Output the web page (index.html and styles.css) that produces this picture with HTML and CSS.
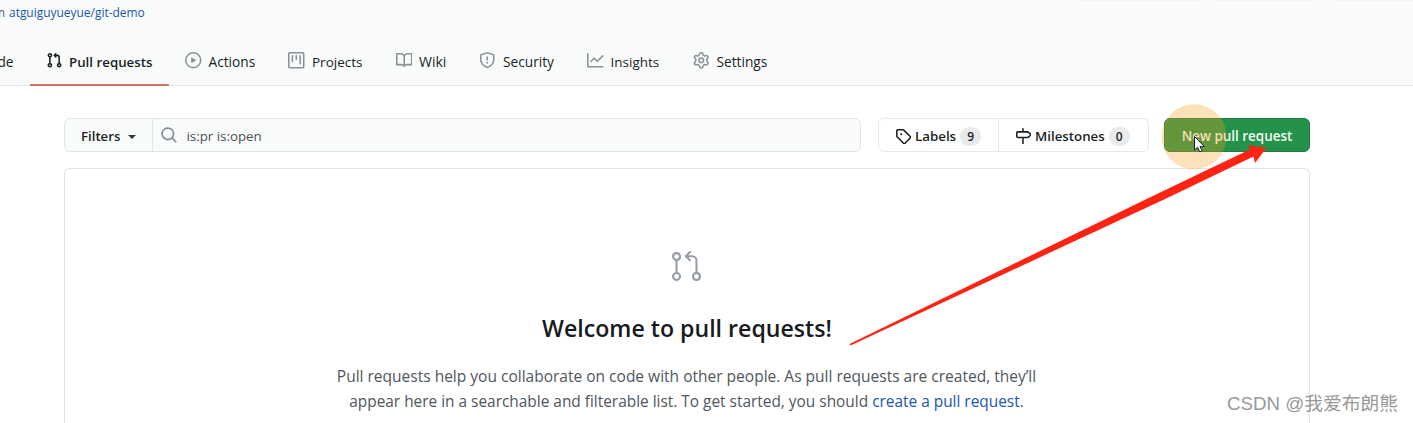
FILE: index.html
```html
<!DOCTYPE html>
<html lang="en">
<head>
<meta charset="utf-8">
<title>Pull requests</title>
<link rel="stylesheet" href="styles.css">
</head>
<body>
<header class="repo-head">
  <div class="top-actions"><span class="stub stub-watch"></span><span class="stub stub-star"></span><span class="stub stub-fork"></span></div>
  <div class="forked"><span class="forked-from">m</span> <a class="link">atguiguyueyue/git-demo</a></div>
  <nav class="tabs">
    <a class="tab code">de</a>
    <a class="tab pulls selected"><svg class="icon" viewBox="0 0 16 16"><path fill-rule="evenodd" d="M7.177 3.073L9.573.677A.25.25 0 0110 .854v4.792a.25.25 0 01-.427.177L7.177 3.427a.25.25 0 010-.354zM3.75 2.5a.75.75 0 100 1.5.75.75 0 000-1.5zm-2.25.75a2.25 2.25 0 113 2.122v5.256a2.251 2.251 0 11-1.5 0V5.372A2.25 2.25 0 011.5 3.25zM11 2.5h-1V4h1a1 1 0 011 1v5.628a2.251 2.251 0 101.5 0V5A2.5 2.5 0 0011 2.5zm1 10.25a.75.75 0 111.5 0 .75.75 0 01-1.5 0zM3.75 12a.75.75 0 100 1.5.75.75 0 000-1.5z"/></svg>Pull requests</a>
    <a class="tab actions"><svg class="icon" viewBox="0 0 16 16"><path fill-rule="evenodd" d="M1.5 8a6.500 6.500 0 1113 0 6.500 6.500 0 01-13 0zM8 0a8 8 0 100 16A8 8 0 008 0zM6.379 5.227A.25.25 0 006 5.442v5.117a.25.25 0 00.379.214l4.264-2.559a.25.25 0 000-.428L6.379 5.227z"/></svg>Actions</a>
    <a class="tab projects"><svg class="icon" viewBox="0 0 16 16"><path fill-rule="evenodd" d="M1.750 0A1.750 1.750 0 000 1.750v12.500C0 15.216.784 16 1.750 16h12.500A1.750 1.750 0 0016 14.250V1.750A1.750 1.750 0 0014.250 0H1.750zM1.500 1.750a.25.25 0 01.25-.25h12.500a.25.25 0 01.25.25v12.500a.25.25 0 01-.25.25H1.750a.25.25 0 01-.25-.25V1.750zM11.750 3a.75.75 0 00-.75.75v7.500a.75.75 0 001.500 0v-7.500a.75.75 0 00-.75-.75zm-8.250.75a.75.75 0 011.500 0v5.500a.75.75 0 01-1.500 0v-5.500zM8 3a.75.75 0 00-.75.75v3.500a.75.75 0 001.500 0v-3.500A.75.75 0 008 3z"/></svg>Projects</a>
    <a class="tab wiki"><svg class="icon" viewBox="0 0 16 16"><path fill-rule="evenodd" d="M0 1.750A.75.75 0 01.75 1h4.253c1.227 0 2.317.590 3 1.501A3.744 3.744 0 0111.006 1h4.245a.75.75 0 01.75.75v10.500a.75.75 0 01-.75.75h-4.507a2.250 2.250 0 00-1.591.659l-.622.621a.75.75 0 01-1.060 0l-.622-.621A2.250 2.250 0 005.258 13H.75a.75.75 0 01-.75-.75V1.750zm8.755 3a2.250 2.250 0 012.250-2.250H14.500v9h-3.757c-.71 0-1.400.201-1.992.572l.004-7.322zm-1.504 7.324l.004-5.073-.002-2.253A2.250 2.250 0 005.003 2.500H1.500v9h3.757a3.750 3.750 0 011.994.574z"/></svg>Wiki</a>
    <a class="tab security"><svg class="icon" viewBox="0 0 16 16"><path fill-rule="evenodd" d="M7.467.133a1.750 1.750 0 011.066 0l5.250 1.680A1.750 1.750 0 0115 3.480V7c0 1.566-.320 3.182-1.303 4.682-.983 1.498-2.585 2.813-5.032 3.855a1.700 1.700 0 01-1.330 0c-2.447-1.042-4.049-2.357-5.032-3.855C1.320 10.182 1 8.566 1 7V3.480a1.750 1.750 0 011.217-1.667l5.250-1.680zm.610 1.429a.25.25 0 00-.153 0l-5.250 1.680a.25.25 0 00-.174.238V7c0 1.358.275 2.666 1.057 3.860.784 1.194 2.121 2.340 4.366 3.297a.2.2 0 00.154 0c2.245-.956 3.582-2.104 4.366-3.298C13.225 9.666 13.500 8.360 13.500 7V3.480a.25.25 0 00-.174-.237l-5.250-1.680zM9 10.500a1 1 0 11-2 0 1 1 0 012 0zm-.25-5.750a.75.75 0 10-1.500 0v3a.75.75 0 001.500 0v-3z"/></svg>Security</a>
    <a class="tab insights"><svg class="icon" viewBox="0 0 16 16"><path fill-rule="evenodd" d="M1.500 1.750a.75.75 0 00-1.500 0v12.500c0 .414.336.75.75.75h14.500a.75.75 0 000-1.500H1.500V1.750zm14.280 2.530a.75.75 0 00-1.060-1.060L10 7.940 7.530 5.470a.75.75 0 00-1.060 0L3.220 8.720a.75.75 0 001.060 1.060L7 7.060l2.470 2.470a.75.75 0 001.060 0l5.250-5.250z"/></svg>Insights</a>
    <a class="tab settings"><svg class="icon" viewBox="0 0 16 16"><path fill-rule="evenodd" d="M7.429 1.525a6.593 6.593 0 011.142 0c.036.003.108.036.137.146l.289 1.105c.147.560.550.967.997 1.189.174.086.341.183.501.290.417.278.970.423 1.530.270l1.102-.303c.110-.030.175.016.195.046.219.310.410.641.573.989.014.031.022.110-.059.190l-.815.806c-.411.406-.562.957-.530 1.456a4.588 4.588 0 010 .582c-.032.499.119 1.050.530 1.456l.815.806c.080.080.073.159.059.190a6.494 6.494 0 01-.573.990c-.020.029-.086.074-.195.045l-1.103-.303c-.559-.153-1.112-.008-1.529.270-.160.107-.327.204-.500.290-.449.222-.851.628-.998 1.189l-.289 1.105c-.029.110-.101.143-.137.146a6.613 6.613 0 01-1.142 0c-.036-.003-.108-.037-.137-.146l-.289-1.105c-.147-.560-.550-.967-.997-1.189a4.502 4.502 0 01-.501-.290c-.417-.278-.970-.423-1.530-.270l-1.102.303c-.110.030-.175-.016-.195-.046a6.492 6.492 0 01-.573-.989c-.014-.031-.022-.110.059-.190l.815-.806c.411-.406.562-.957.530-1.456a4.587 4.587 0 010-.582c.032-.499-.119-1.050-.530-1.456l-.815-.806c-.080-.080-.073-.159-.059-.190a6.440 6.440 0 01.573-.990c.020-.029.086-.075.195-.045l1.103.303c.559.153 1.112.008 1.529-.270.160-.107.327-.204.500-.290.449-.222.851-.628.998-1.189l.289-1.105c.029-.110.101-.143.137-.146zM8 0c-.236 0-.470.010-.701.030-.743.065-1.290.615-1.458 1.261l-.290 1.106c-.017.066-.078.158-.211.224a5.994 5.994 0 00-.668.386c-.123.082-.233.090-.300.071L3.270 2.776c-.644-.177-1.392.020-1.820.630a7.977 7.977 0 00-.704 1.217c-.315.675-.111 1.422.363 1.891l.815.806c.050.048.098.147.088.294a6.084 6.084 0 000 .772c.010.147-.038.246-.088.294l-.815.806c-.474.469-.678 1.216-.363 1.891.200.428.436.835.704 1.218.428.609 1.176.806 1.820.630l1.103-.303c.066-.019.176-.011.299.071.213.143.436.272.668.386.133.066.194.158.212.224l.289 1.106c.169.646.715 1.196 1.458 1.260a8.094 8.094 0 001.402 0c.743-.064 1.290-.614 1.458-1.260l.290-1.106c.017-.066.078-.158.211-.224a5.980 5.980 0 00.668-.386c.123-.082.233-.090.300-.071l1.102.302c.644.177 1.392-.020 1.820-.630.268-.382.505-.789.704-1.217.315-.675.111-1.422-.364-1.891l-.814-.806c-.050-.048-.098-.147-.088-.294a6.100 6.100 0 000-.772c-.010-.147.039-.246.088-.294l.814-.806c.475-.469.679-1.216.364-1.891a7.992 7.992 0 00-.704-1.218c-.428-.609-1.176-.806-1.820-.630l-1.103.303c-.066.019-.176.011-.299-.071a5.991 5.991 0 00-.668-.386c-.133-.066-.194-.158-.212-.224L10.160 1.290C9.990.645 9.444.095 8.701.031A8.094 8.094 0 008 0zm1.500 8a1.500 1.500 0 11-3 0 1.500 1.500 0 013 0zM11 8a3 3 0 11-6 0 3 3 0 016 0z"/></svg>Settings</a>
  </nav>
</header>
<main class="content">
  <div class="toolbar">
    <div class="search">
      <button class="filters">Filters<span class="caret"></span></button>
      <div class="query"><svg class="icon" viewBox="0 0 16 16"><path fill-rule="evenodd" d="M11.500 7a4.499 4.499 0 11-8.998 0A4.499 4.499 0 0111.500 7zm-.820 4.740a6 6 0 111.060-1.060l3.040 3.040a.75.75 0 11-1.060 1.060l-3.040-3.040z" transform="translate(-.8 -.8) scale(1.06)"/></svg>is:pr is:open</div>
    </div>
    <div class="subnav">
      <a class="sub labels"><svg class="icon" viewBox="0 0 16 16"><path fill-rule="evenodd" d="M2.500 7.775V2.750a.25.25 0 01.25-.25h5.025a.25.25 0 01.177.073l6.250 6.250a.25.25 0 010 .354l-5.025 5.025a.25.25 0 01-.354 0l-6.250-6.250a.25.25 0 01-.073-.177zm-1.500 0V2.750C1 1.784 1.784 1 2.750 1h5.025c.464 0 .910.184 1.238.513l6.250 6.250a1.750 1.750 0 010 2.474l-5.026 5.026a1.750 1.750 0 01-2.474 0l-6.250-6.250A1.750 1.750 0 011 7.775zM6 5a1 1 0 100 2 1 1 0 000-2z"/></svg>Labels<span class="count">9</span></a>
      <a class="sub milestones"><svg class="icon" viewBox="0 0 16 16"><path fill-rule="evenodd" d="M7.750 0a.75.75 0 01.75.75V3h3.634c.414 0 .814.147 1.130.414l2.070 1.750a1.750 1.750 0 010 2.672l-2.070 1.750a1.750 1.750 0 01-1.130.414H8.500v5.250a.75.75 0 11-1.500 0V10H2.750A1.750 1.750 0 011 8.250v-3.500C1 3.784 1.784 3 2.750 3H7V.75A.75.75 0 017.750 0zm0 8.500h4.384a.25.25 0 00.161-.060l2.070-1.750a.25.25 0 000-.380l-2.070-1.750a.25.25 0 00-.161-.060H2.750a.25.25 0 00-.25.25v3.500c0 .138.112.250.250.250h5z"/></svg>Milestones<span class="count">0</span></a>
    </div>
    <button class="new-pr">New pull request</button>
  </div>
  <section class="blank">
    <svg class="blank-icon" viewBox="0 0 24 24"><path fill-rule="evenodd" d="M4.750 3a1.750 1.750 0 100 3.500 1.750 1.750 0 000-3.500zM1.500 4.750a3.250 3.250 0 114 3.163v8.174a3.251 3.251 0 11-1.500 0V7.913A3.251 3.251 0 011.500 4.750zM16 19.250a3.252 3.252 0 012.500-3.163V7.750a2.500 2.500 0 00-2.500-2.500h-2.690l1.720 1.720a.75.75 0 11-1.060 1.060l-3-3a.75.75 0 010-1.060l3-3a.75.75 0 111.060 1.060l-1.720 1.720H16a4 4 0 014 4v8.337a3.251 3.251 0 11-4 3.163zm-11.250-1.750a1.750 1.750 0 100 3.500 1.750 1.750 0 000-3.500zm14.500 0a1.750 1.750 0 100 3.500 1.750 1.750 0 000-3.500z"/></svg>
    <h3 class="blank-title">Welcome to pull requests!</h3>
    <p class="blank-text"><span class="line-one">Pull requests help you collaborate on code with other people. As pull requests are created, they’ll</span><br>appear here in a searchable and filterable list. To get started, you should <a class="link">create a pull request</a>.</p>
  </section>
</main>
<svg class="annotation" viewBox="0 0 1413 423">
  <circle cx="1194" cy="136.700" r="32.500" fill="#f9a01e" fill-opacity=".315"/>
  <path d="M849.500 344L1145.500 199.500 1250.300 149.300 1247.300 145.300 1266.500 147.700 1255 163 1253.500 156.500 1164 199.500 850.500 345.500z" fill="#ff2313"/>
  <path d="M1194.500 136.500V150l3.100-2.800 2.200 4.700 2.300-1-2.100-4.500h4.300z" fill="#fff" stroke="#17203a" stroke-width="1"/>
</svg>
<div class="watermark">CSDN @我爱布朗熊</div>
</body>
</html>
```

FILE: styles.css
```css
* { box-sizing: border-box; }
body {
  margin: 0;
  height: 423px;
  overflow: hidden;
  position: relative;
  display: flex;
  flex-direction: column;
  background: #fff;
  color: #1b1f24;
  font: 13.7px/20px "Open Sans", "Noto Sans CJK SC", sans-serif;
}
.link { color: #1b56ad; }
.repo-head {
  height: 86px;
  flex: none;
  background: #f9fbfb;
  border-bottom: 1px solid #e3e5e7;
  display: flex;
  flex-direction: column;
}
.top-actions { height: 1px; flex: none; display: flex; justify-content: flex-end; gap: 19px; }
.stub { background: #f1f3f3; height: 1px; }
.stub-watch { width: 121px; }
.stub-star { width: 98px; }
.stub-fork { width: 78px; }
.forked { height: 24px; line-height: 24px; font-size: 11.95px; display: flex; gap: 4px; }
.forked-from { width: 5px; display: flex; justify-content: flex-end; color: #57606a; }
.tabs { display: flex; height: 61px; margin-top: auto; margin-bottom: -1px; }
.tab { display: flex; align-items: center; flex: none; padding: 13px 0 0 17px; white-space: nowrap; }
.icon { width: 16.500px; height: 16.500px; flex: none; fill: currentColor; }
.tab .icon { margin-right: 6.500px; color: #8b9198; position: relative; top: -1.500px; }
.code { width: 30px; justify-content: flex-end; padding: 13px 16.500px 0 0; }
.pulls { width: 139px; font-size: 13.300px; font-weight: 600; border-bottom: 2px solid #d5775c; padding: 15px 0 0 16px; }
.pulls .icon { color: #1b1f24; }
.actions { width: 103px; padding-left: 16px; }
.actions .icon { margin-right: 7px; }
.projects { width: 106.500px; padding-left: 16px; font-size: 13.500px; }
.projects .icon { margin-right: 7.500px; }
.wiki { width: 84px; font-size: 14px; }
.wiki .icon { margin-right: 7px; }
.security { width: 108px; padding-left: 16.500px; }
.security .icon { margin-right: 7.500px; }
.insights { width: 106px; padding-left: 16.500px; font-size: 13.500px; }
.insights .icon { margin-right: 7px; }
.settings { padding-left: 16.500px; }
.settings .icon { margin-right: 7px; }
.content { flex: 1; min-height: 0; padding: 32px 103px 0 64px; display: flex; flex-direction: column; }
.toolbar { display: flex; flex: none; height: 34px; }
.search {
  width: 797px;
  display: flex;
  flex: none;
  border: 1px solid #e1e5e8;
  border-radius: 6px;
  background: #f9fbfb;
  overflow: hidden;
}
.filters {
  width: 88px;
  padding: 1px 0 0 16px;
  display: flex;
  align-items: center;
  gap: 8px;
  border: 0;
  border-right: 1px solid #e1e5e8;
  background: none;
  color: #1b1f24;
  font: 600 13.200px/20px "Open Sans", sans-serif;
}
.caret { border: 4.500px solid transparent; border-top-color: #33383e; border-bottom: 0; margin-top: 2px; }
.query { display: flex; align-items: center; gap: 9px; padding: 2px 0 0 8px; font-size: 13.300px; color: #4b5159; }
.query .icon { color: #868c94; margin-top: -2px; }
.subnav {
  width: 271px;
  flex: none;
  margin-left: 16.500px;
  display: flex;
  border: 1px solid #e6e9ec;
  border-radius: 6px;
  font-size: 13.300px;
  font-weight: 600;
}
.sub { display: flex; align-items: center; padding: 2px 0 0 16px; }
.sub .icon { margin-right: 4px; }
.labels { width: 120px; border-right: 1px solid #e1e5e8; }
.count {
  margin-left: 4px;
  width: 21px;
  height: 19px;
  border-radius: 10px;
  background: #e8eaec;
  font-size: 12px;
  line-height: 19px;
  text-align: center;
}
.new-pr {
  flex: 1;
  margin-left: 15.500px;
  padding: 2px 0 0;
  border: 1px solid #1f7b40;
  border-radius: 6px;
  background: #24924b;
  color: #f3faf5;
  font: 600 13.450px/20px "Open Sans", sans-serif;
}
.blank {
  flex: 1;
  min-height: 0;
  margin-top: 16px;
  border: 1px solid #e1e4e6;
  border-bottom: 0;
  border-radius: 6px 6px 0 0;
  display: flex;
  flex-direction: column;
  align-items: center;
}
.blank-icon { width: 33px; height: 33px; flex: none; margin: 81px 1px 0 0; fill: #969da5; }
.blank-title { margin: 27px 0 0; font-size: 23.150px; line-height: 36px; font-weight: 600; color: #171b20; }
.blank-text { margin: 18px 1px 0 0; font-size: 15.420px; line-height: 24.500px; color: #4f565e; text-align: center; white-space: nowrap; }
.line-one { font-size: 15.520px; }
.annotation { position: absolute; left: 0; top: 0; width: 1413px; height: 423px; }
.watermark {
  position: absolute;
  right: 15px;
  bottom: 5px;
  font: 18.740px/28px "Liberation Sans", "Noto Sans CJK SC", sans-serif;
  color: #999;
}
```
